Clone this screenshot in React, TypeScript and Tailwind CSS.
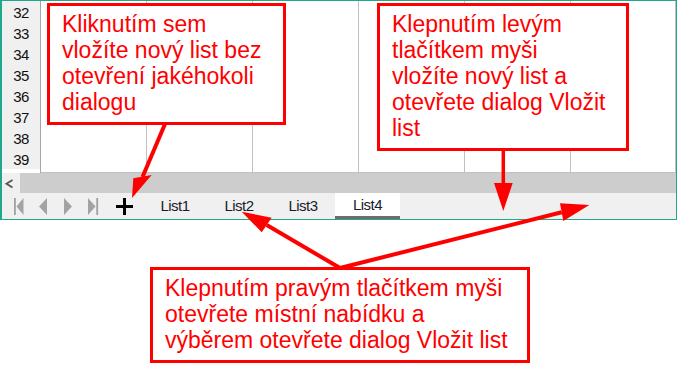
import React from 'react';

/* ─── Spreadsheet bits ───────────────────────────────────────────────── */

const ROWS = [32, 33, 34, 35, 36, 37, 38, 39];
const COLS = [0, 1, 2, 3, 4, 5];
const TABS = ['List1', 'List2', 'List3', 'List4'];

const GridRow = ({ n }: { n: number }) => (
  <div className="grid grid-cols-[39px_repeat(5,106px)_1fr] h-[21px]">
    <div className="bg-[#f0f0f0] border-r border-b border-r-[#a6a6a6] border-b-[#c0c0c0] flex items-center justify-center text-[15px] tracking-[-0.5px] text-[#111] pt-[1px]">
      {n}
    </div>
    {COLS.map(c => (
      <div key={c} className="bg-white border-r border-b border-[#c0c0c0]" />
    ))}
  </div>
);

const NavButtons = () => (
  <div className="flex h-full">
    <svg width="25" height="26" viewBox="0 0 25 26">
      <rect x="8" y="5" width="1.8" height="17" fill="#a0a0a0" />
      <polygon points="17.5,5 10.5,13.5 17.5,22" fill="#a3a3a3" />
    </svg>
    <svg width="25" height="26" viewBox="0 0 25 26">
      <polygon points="16,5 8,13.5 16,22" fill="#a3a3a3" />
    </svg>
    <svg width="25" height="26" viewBox="0 0 25 26">
      <polygon points="8,5 16,13.5 8,22" fill="#a3a3a3" />
    </svg>
    <svg width="25" height="26" viewBox="0 0 25 26">
      <polygon points="7,5 14.5,13.5 7,22" fill="#a3a3a3" />
      <rect x="15.3" y="5" width="1.8" height="17" fill="#a0a0a0" />
    </svg>
  </div>
);

const Callout = ({ className, lines }: { className: string; lines: string[] }) => (
  <div className={`absolute bg-white border-[3px] border-[#ff0000] pl-3 pt-[5px] pb-[7px] text-[23px] leading-[26px] text-[#ff0000] whitespace-nowrap ${className}`}>
    {lines.map((l, i) => <div key={i}>{l}</div>)}
  </div>
);

export default function App() {
  return (
    <div
      className="relative w-[678px] h-[365px] bg-white overflow-hidden"
      style={{ fontFamily: '"Liberation Sans", Arial, sans-serif' }}
    >
      {/* spreadsheet window */}
      <div className="w-[677px] border-y border-r border-l-2 border-[#1fa88a] flex flex-col">
        {ROWS.map(n => <GridRow key={n} n={n} />)}

        {/* partially visible row 40 */}
        <div className="grid grid-cols-[39px_repeat(5,106px)_1fr] h-[4px]">
          <div className="bg-white border-r border-[#a6a6a6]" />
          {COLS.map(c => <div key={c} className="border-r border-[#c0c0c0]" />)}
        </div>

        {/* horizontal scrollbar */}
        <div className="flex h-[20px]">
          <div className="w-[18px] bg-[#f0f0f0]">
            <svg width="18" height="20" viewBox="0 0 18 20">
              <polyline points="10.5,7 4.5,10.7 10.5,14.4" fill="none" stroke="#555" strokeWidth="1.8" />
            </svg>
          </div>
          <div className="flex-1 bg-[#cdcdcd]" />
        </div>

        {/* sheet tabs */}
        <div className="flex h-[26px] bg-[#f0f0f0] pl-[4px] text-[15px] tracking-[-0.5px] text-[#1a1a2e]">
          <NavButtons />
          <div className="w-[37px] h-full flex items-center justify-center">
            <svg width="17" height="17" viewBox="0 0 17 17">
              <path d="M8.5 0 V17 M0 8.5 H17" stroke="#000" strokeWidth="3" />
            </svg>
          </div>
          {TABS.map((t, i) =>
            i === 3 ? (
              <div key={t} className="w-[65px] h-full bg-white border-b-[3px] border-[#6d6d6d] flex items-center justify-center pt-[2px]">
                {t}
              </div>
            ) : (
              <div key={t} className="w-[64px] h-full flex items-center justify-center pt-[1px]">
                {t}
              </div>
            )
          )}
        </div>
      </div>

      {/* arrows */}
      <svg className="absolute inset-0 pointer-events-none" width="678" height="365" viewBox="0 0 678 365">
        <g fill="#ff0000" stroke="#ff0000" strokeWidth="4">
          <line x1="165" y1="124" x2="142.5" y2="177" />
          <polygon points="132,198 133.3,178.3 151.7,175" stroke="none" />

          <line x1="503.3" y1="150" x2="503.3" y2="184" strokeWidth="3.5" />
          <polygon points="503.3,211 494,183 512.7,183" stroke="none" />

          <line x1="340" y1="268" x2="561.7" y2="212.2" />
          <polygon points="589.3,205 560,203.3 563.3,221" stroke="none" />

          <line x1="340" y1="268" x2="266.7" y2="225" />
          <polygon points="241.7,211.7 271.7,217.7 261.7,232.3" stroke="none" />
        </g>
      </svg>

      {/* callouts */}
      <Callout
        className="left-[47px] top-[3px] w-[239px]"
        lines={['Kliknutím sem', 'vložíte nový list bez', 'otevření jakéhokoli', 'dialogu']}
      />
      <Callout
        className="left-[377px] top-[3px] w-[252px]"
        lines={['Klepnutím levým', 'tlačítkem myši', 'vložíte nový list a', 'otevřete dialog Vložit', 'list']}
      />
      <Callout
        className="left-[150px] top-[267px] w-[380px]"
        lines={['Klepnutím pravým tlačítkem myši', 'otevřete místní nabídku a', 'výběrem otevřete dialog Vložit list']}
      />
    </div>
  );
}
